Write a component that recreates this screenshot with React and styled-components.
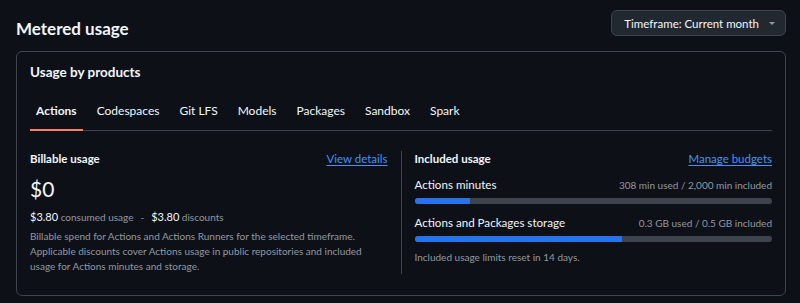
import React from "react";
import styled, { createGlobalStyle } from "styled-components";

const GlobalStyle = createGlobalStyle`
  body {
    margin: 0;
    background: #0d1117;
    color: #f0f6fc;
    font-family: Lato, "Noto Sans", "Liberation Sans", sans-serif;
  }
`;

const Page = styled.div`
  padding: 10px 14px 0 16px;
`;

const Header = styled.div`
  display: flex;
  justify-content: space-between;
  align-items: flex-start;
`;

const Title = styled.h2`
  margin: 5px 0 0;
  font-size: 17px;
  line-height: 28px;
  font-weight: 700;
`;

const Dropdown = styled.button`
  display: flex;
  align-items: center;
  gap: 10px;
  height: 26px;
  padding: 0 10px 0 12px;
  background: #212830;
  border: 1px solid #3d444d;
  border-radius: 6px;
  color: #f0f6fc;
  font-family: inherit;
  font-size: 11.5px;
  font-weight: 400;
  cursor: pointer;
`;

const Caret = styled.span`
  width: 0;
  height: 0;
  border-left: 3.5px solid transparent;
  border-right: 3.5px solid transparent;
  border-top: 3.5px solid #9198a1;
`;

const Card = styled.section`
  margin-top: 8px;
  border: 1px solid #3d444d;
  border-radius: 6px;
  padding: 10px 13px 21px;
`;

const CardTitle = styled.h3`
  margin: 0;
  font-size: 13.5px;
  line-height: 20px;
  font-weight: 700;
`;

const Tabs = styled.nav`
  display: flex;
  gap: 8px;
  margin-top: 11px;
  border-bottom: 1px solid #3d444d;
`;

const Tab = styled.a`
  padding: 8px 6px;
  font-size: 12px;
  line-height: 20px;
  font-weight: ${(p) => (p.$active ? 700 : 400)};
  color: #f0f6fc;
  text-decoration: none;
  margin-bottom: -1px;
  border-bottom: 2px solid ${(p) => (p.$active ? "#f78166" : "transparent")};
`;

const Columns = styled.div`
  display: grid;
  grid-template-columns: 1fr 1px 1fr;
  column-gap: 13px;
  margin-top: 20px;
`;

const Divider = styled.div`
  background: #3d444d;
`;

const Column = styled.div`
  display: flex;
  flex-direction: column;
`;

const ColumnHead = styled.div`
  display: flex;
  justify-content: space-between;
  align-items: baseline;
  line-height: 16px;
`;

const SubTitle = styled.h4`
  margin: 0;
  font-size: 11.5px;
  font-weight: 700;
`;

const Link = styled.a`
  font-size: 11.5px;
  color: #4493f8;
  text-decoration: underline;
  text-underline-offset: 2px;
`;

const Amount = styled.div`
  margin-top: 8px;
  font-size: 21px;
  line-height: 28px;
`;

const Breakdown = styled.div`
  margin-top: 6px;
  font-size: 10px;
  line-height: 16px;
  color: #9198a1;
`;

const Money = styled.span`
  font-size: 11px;
  color: #f0f6fc;
`;

const Sep = styled.span`
  margin: 0 7px;
`;

const Note = styled.p`
  margin: ${(p) => p.$top}px 0 0;
  font-size: 10px;
  line-height: 15px;
  color: #9198a1;
`;

const Meter = styled.div`
  margin-top: ${(p) => p.$top}px;
`;

const MeterHead = styled.div`
  display: flex;
  justify-content: space-between;
  align-items: baseline;
  line-height: 16px;
`;

const MeterLabel = styled.span`
  font-size: 11.6px;
`;

const MeterStat = styled.span`
  font-size: 10px;
  color: #9198a1;
`;

const Track = styled.div`
  margin-top: 5px;
  height: 6px;
  border-radius: 3px;
  background: #3d444d;
  overflow: hidden;
`;

const Fill = styled.div`
  height: 100%;
  background: #2574ec;
`;

const tabs = ["Actions", "Codespaces", "Git LFS", "Models", "Packages", "Sandbox", "Spark"];

const meters = [
  { label: "Actions minutes", stat: "308 min used / 2,000 min included", pct: 15.4 },
  { label: "Actions and Packages storage", stat: "0.3 GB used / 0.5 GB included", pct: 58 },
];

export default function App() {
  return (
    <Page>
      <GlobalStyle />
      <Header>
        <Title>Metered usage</Title>
        <Dropdown>
          Timeframe: Current month
          <Caret />
        </Dropdown>
      </Header>
      <Card>
        <CardTitle>Usage by products</CardTitle>
        <Tabs>
          {tabs.map((t, i) => (
            <Tab key={t} href="#" $active={i === 0}>
              {t}
            </Tab>
          ))}
        </Tabs>
        <Columns>
          <Column>
            <ColumnHead>
              <SubTitle>Billable usage</SubTitle>
              <Link href="#">View details</Link>
            </ColumnHead>
            <Amount>$0</Amount>
            <Breakdown>
              <Money>$3.80</Money> consumed usage<Sep>-</Sep><Money>$3.80</Money> discounts
            </Breakdown>
            <Note $top={4}>
              Billable spend for Actions and Actions Runners for the selected timeframe.
              Applicable discounts cover Actions usage in public repositories and included
              usage for Actions minutes and storage.
            </Note>
          </Column>
          <Divider />
          <Column>
            <ColumnHead>
              <SubTitle>Included usage</SubTitle>
              <Link href="#">Manage budgets</Link>
            </ColumnHead>
            {meters.map((m, i) => (
              <Meter key={m.label} $top={i === 0 ? 10 : 11}>
                <MeterHead>
                  <MeterLabel>{m.label}</MeterLabel>
                  <MeterStat>{m.stat}</MeterStat>
                </MeterHead>
                <Track>
                  <Fill style={{ width: `${m.pct}%` }} />
                </Track>
              </Meter>
            ))}
            <Note $top={8}>Included usage limits reset in 14 days.</Note>
          </Column>
        </Columns>
      </Card>
    </Page>
  );
}
